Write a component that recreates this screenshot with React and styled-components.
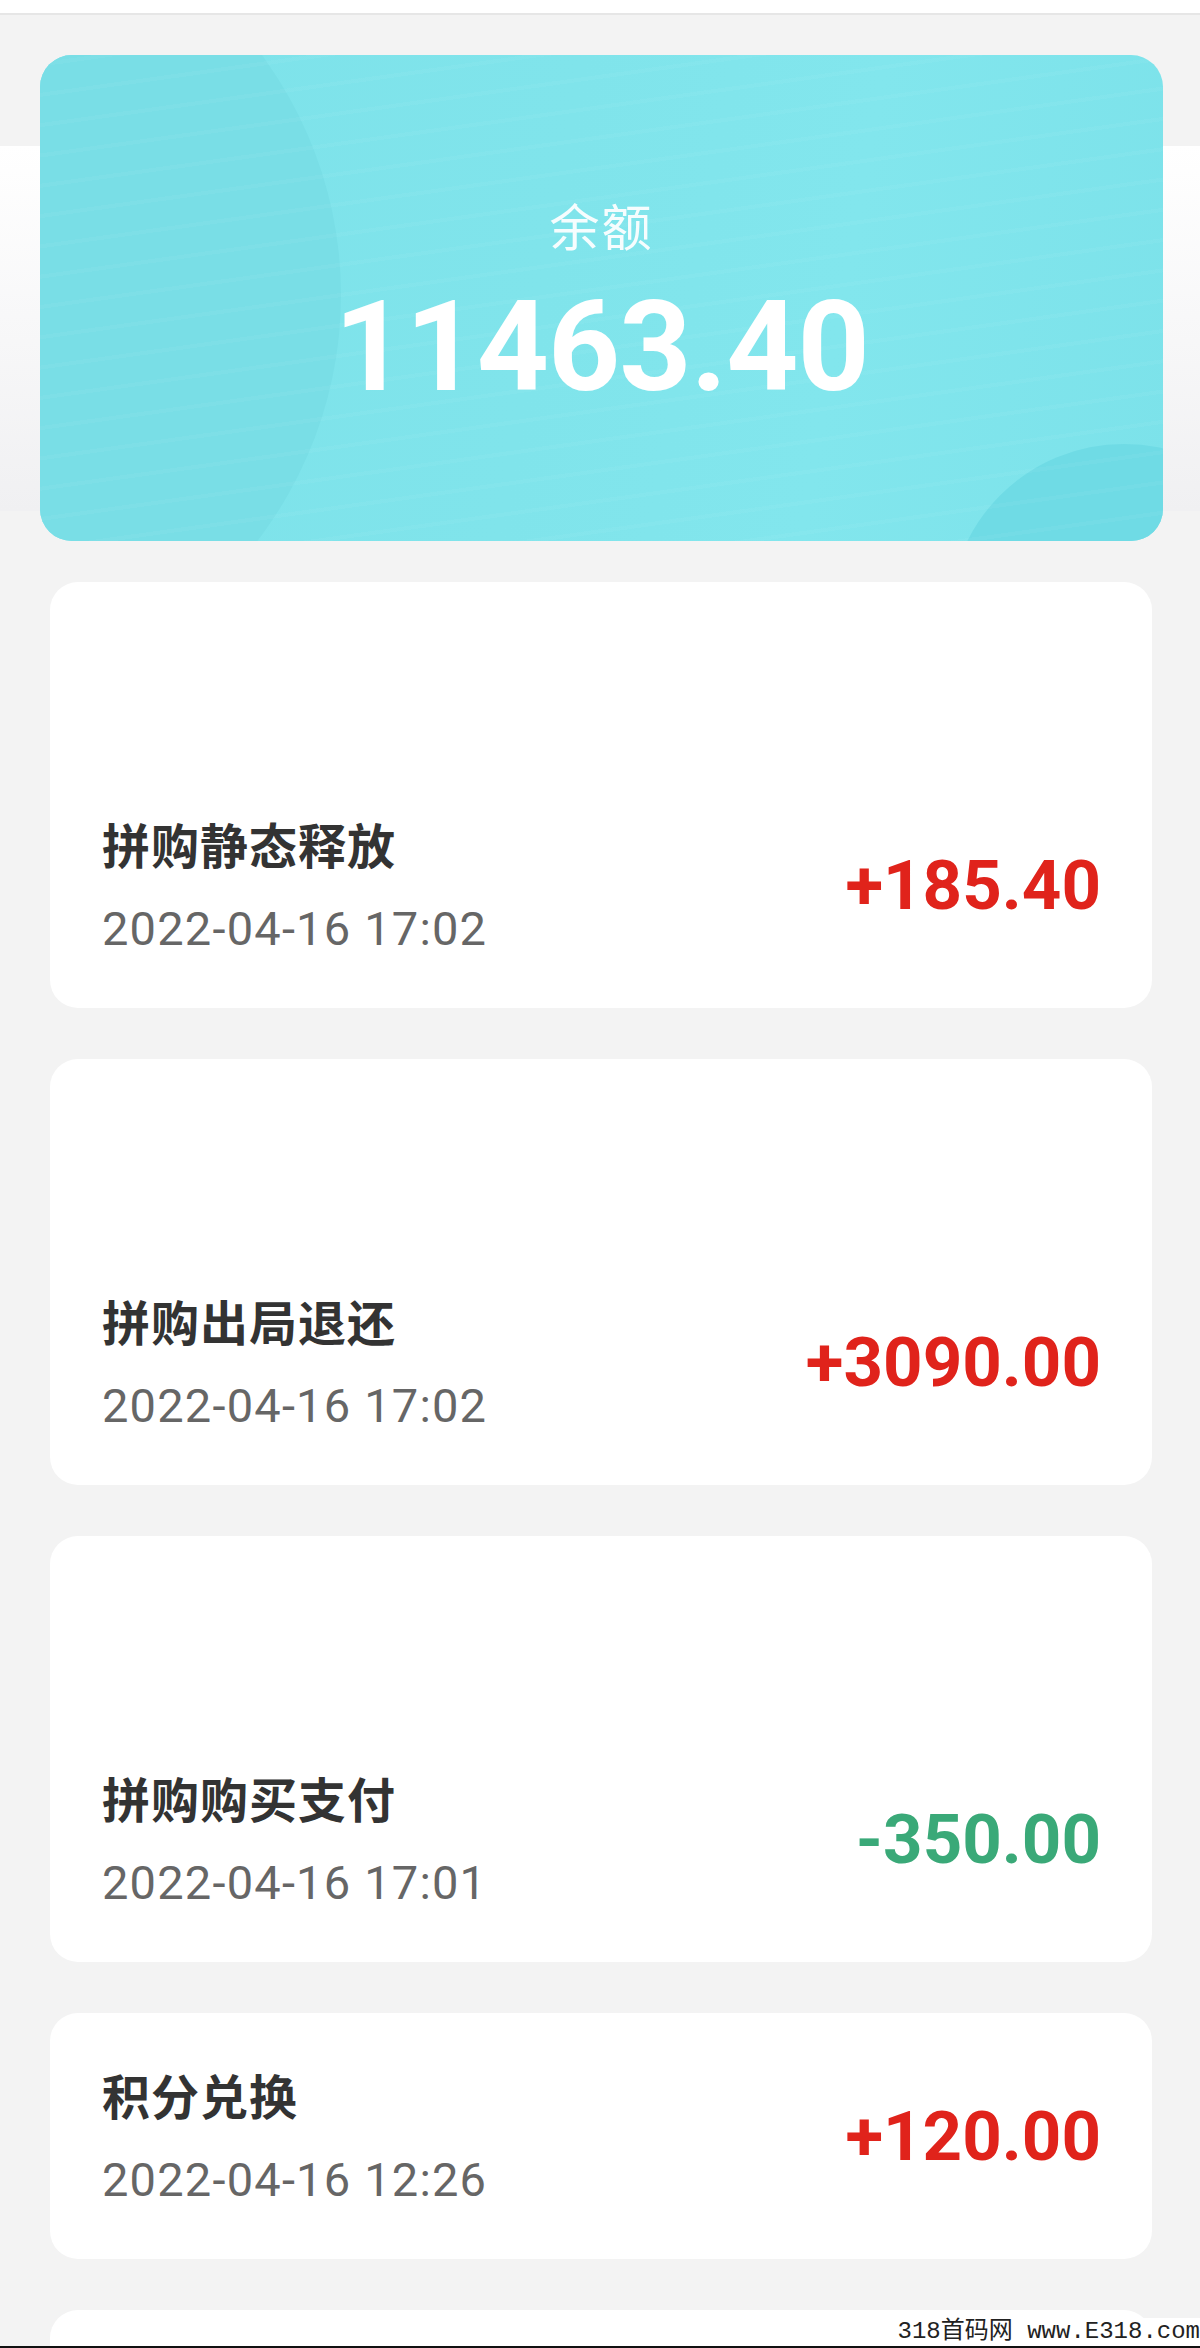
import React from "react";
import styled, { createGlobalStyle, css } from "styled-components";

const GlobalStyle = createGlobalStyle`
  html, body {
    margin: 0;
    padding: 0;
    background: #f3f3f3;
  }
  * { box-sizing: border-box; }
`;

const Page = styled.div`
  position: relative;
  width: 1200px;
  height: 2348px;
  overflow: hidden;
  background: #f3f3f3;
  font-family: "Noto Sans CJK SC", "Noto Sans", sans-serif;
`;

const TopBar = styled.div`
  height: 15px;
  background: #ffffff;
  border-bottom: 2px solid #e6e6e6;
`;

const Hero = styled.section`
  padding: 40px 37px 0 40px;
  background: linear-gradient(
    to bottom,
    #f3f3f3 0px,
    #f3f3f3 131px,
    #ffffff 131px,
    #f0f0f2 496px,
    #f3f3f3 496px
  );
`;

const BalanceCard = styled.div`
  position: relative;
  height: 486px;
  border-radius: 32px;
  overflow: hidden;
  padding-top: 139px;
  display: flex;
  flex-direction: column;
  align-items: center;
  background: linear-gradient(100deg, #7de2ea 0%, #80e4eb 45%, #82e6ed 70%, #7ce2ea 100%);

  &::before {
    content: "";
    position: absolute;
    left: -581px;
    top: -180px;
    width: 882px;
    height: 840px;
    border-radius: 50%;
    background: #79dee6;
  }

  &::after {
    content: "";
    position: absolute;
    left: 909px;
    top: 389px;
    width: 350px;
    height: 350px;
    border-radius: 50%;
    background: #6fdbe5;
  }
`;

const Stripes = styled.div`
  position: absolute;
  inset: 0;
  z-index: 1;
  background: repeating-linear-gradient(
    -8deg,
    rgba(255, 255, 255, 0) 0px,
    rgba(255, 255, 255, 0) 26px,
    rgba(255, 255, 255, 0.035) 26px,
    rgba(255, 255, 255, 0.035) 30px
  );
`;

const BalanceLabel = styled.div`
  position: relative;
  z-index: 2;
  height: 60px;
  line-height: 60px;
  font-size: 50px;
  letter-spacing: 2px;
  color: rgba(255, 255, 255, 0.93);
  font-family: "Noto Sans CJK SC", sans-serif;
`;

const BalanceValue = styled.div`
  position: relative;
  z-index: 2;
  margin-top: 23px;
  height: 140px;
  line-height: 140px;
  font-size: 126px;
  font-weight: 700;
  letter-spacing: -1px;
  color: #ffffff;
  font-family: Roboto, "Liberation Sans", sans-serif;
`;

const List = styled.div`
  display: flex;
  flex-direction: column;
  gap: 51px;
  padding: 41px 48px 0 50px;
`;

const Card = styled.div`
  background: #ffffff;
  border-radius: 28px;
  padding: 0 51px 0 52px;
  display: flex;
  flex-direction: column;
`;

const MediaArea = styled.div`
  height: 180px;
`;

const Row = styled.div`
  min-height: 246px;
  display: flex;
  align-items: center;
  justify-content: space-between;
`;

const Info = styled.div`
  display: flex;
  flex-direction: column;
  gap: 28px;
`;

const Title = styled.div`
  height: 60px;
  line-height: 60px;
  font-size: 48px;
  letter-spacing: 1px;
  font-weight: 700;
  color: #333333;
  font-family: "Noto Sans CJK SC", sans-serif;
`;

const DateText = styled.div`
  height: 56px;
  line-height: 56px;
  font-size: 47px;
  letter-spacing: 1.2px;
  color: #666666;
  font-family: Roboto, "Noto Sans", sans-serif;
`;

const Amount = styled.div`
  font-size: 69px;
  font-weight: 700;
  font-family: Roboto, "Liberation Sans", sans-serif;
  ${(p) =>
    p.$negative
      ? css`color: #3aa978;`
      : css`color: #e0231b;`}
`;

const Watermark = styled.div`
  position: absolute;
  right: 0;
  bottom: 2px;
  padding: 0 0 0 4px;
  font-family: "Liberation Mono", "Noto Sans CJK SC", monospace;
  font-size: 24px;
  line-height: 28px;
  color: #222;
  background: #ffffff;
`;

const BottomLine = styled.div`
  position: absolute;
  left: 0;
  right: 0;
  bottom: 0;
  height: 2px;
  background: #111;
`;

const records = [
  { title: "拼购静态释放", date: "2022-04-16 17:02", amount: "+185.40", media: true },
  { title: "拼购出局退还", date: "2022-04-16 17:02", amount: "+3090.00", media: true },
  { title: "拼购购买支付", date: "2022-04-16 17:01", amount: "-350.00", media: true },
  { title: "积分兑换", date: "2022-04-16 12:26", amount: "+120.00", media: false },
  { title: "", date: "", amount: "", media: true },
];

export default function App() {
  return (
    <>
      <GlobalStyle />
      <Page>
        <TopBar />
        <Hero>
          <BalanceCard>
            <Stripes />
            <BalanceLabel>余额</BalanceLabel>
            <BalanceValue>11463.40</BalanceValue>
          </BalanceCard>
        </Hero>
        <List>
          {records.map((r, i) => (
            <Card key={i}>
              {r.media && <MediaArea />}
              <Row>
                <Info>
                  <Title>{r.title}</Title>
                  <DateText>{r.date}</DateText>
                </Info>
                <Amount $negative={r.amount.startsWith("-")}>{r.amount}</Amount>
              </Row>
            </Card>
          ))}
        </List>
        <Watermark>318首码网 www.E318.com</Watermark>
        <BottomLine />
      </Page>
    </>
  );
}
